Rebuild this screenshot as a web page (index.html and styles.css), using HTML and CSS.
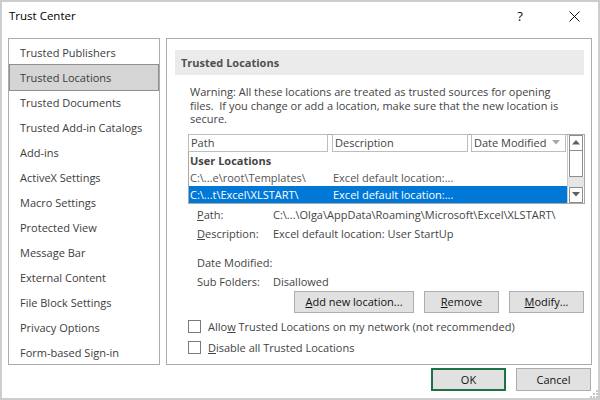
FILE: index.html
```html
<!DOCTYPE html>
<html>
<head>
<meta charset="utf-8">
<link rel="stylesheet" href="styles.css">
</head>
<body>
<div class="window">
  <div class="titlebar">
    <span class="title">Trust Center</span>
    <span class="help">?</span>
    <span class="close"><svg width="11" height="11" viewBox="0 0 11 11"><path d="M0.5 0.5 L10.5 10.5 M10.5 0.5 L0.5 10.5" stroke="#111" stroke-width="1" fill="none"/></svg></span>
  </div>
  <div class="main">
    <ul class="nav">
      <li>Trusted Publishers</li>
      <li class="active">Trusted Locations</li>
      <li>Trusted Documents</li>
      <li>Trusted Add-in Catalogs</li>
      <li>Add-ins</li>
      <li>ActiveX Settings</li>
      <li>Macro Settings</li>
      <li>Protected View</li>
      <li>Message Bar</li>
      <li>External Content</li>
      <li>File Block Settings</li>
      <li>Privacy Options</li>
      <li>Form-based Sign-in</li>
    </ul>
    <div class="panel">
      <div class="section-head">Trusted Locations</div>
      <div class="content">
        <p class="warning">Warning: All these locations are treated as trusted sources for opening<br>files.&nbsp; If you change or add a location, make sure that the new location is<br>secure.</p>
        <div class="list">
          <div class="list-body">
            <div class="list-header">
              <div class="hcell c-path">Path</div>
              <div class="hcell c-desc">Description</div>
              <div class="hcell c-date">Date Modified <svg class="sort" width="8" height="5" viewBox="0 0 8 5"><path d="M0 0 H8 L4 4.5 Z" fill="#a8a8a8"/></svg></div>
            </div>
            <div class="row group">User Locations</div>
            <div class="row"><span class="r-path">C:\...e\root\Templates\</span><span class="r-desc">Excel default location:...</span></div>
            <div class="row selected"><span class="r-path">C:\...t\Excel\XLSTART\</span><span class="r-desc">Excel default location:...</span></div>
          </div>
          <div class="scrollbar">
            <div class="sb-btn"><svg width="8" height="5" viewBox="0 0 8 5"><path d="M0 4.5 H8 L4 0 Z" fill="#606060"/></svg></div>
            <div class="sb-thumb"></div>
            <div class="sb-track"></div>
            <div class="sb-btn"><svg width="8" height="5" viewBox="0 0 8 5"><path d="M0 0 H8 L4 4.5 Z" fill="#606060"/></svg></div>
          </div>
        </div>
        <div class="details">
          <span class="label"><u>P</u>ath:</span><span class="value">C:\...\Olga\AppData\Roaming\Microsoft\Excel\XLSTART\</span>
          <span class="label"><u>D</u>escription:</span><span class="value">Excel default location: User StartUp</span>
          <span class="label gap">Date Modified:</span><span class="value gap"></span>
          <span class="label">Sub Folders:</span><span class="value">Disallowed</span>
        </div>
        <div class="actions">
          <button class="btn btn-add"><u>A</u>dd new location...</button>
          <button class="btn"><u>R</u>emove</button>
          <button class="btn"><u>M</u>odify...</button>
        </div>
        <label class="check"><span class="box"></span><span class="text">Allo<u>w</u> Trusted Locations on my network (not recommended)</span></label>
        <label class="check"><span class="box"></span><span class="text"><u>D</u>isable all Trusted Locations</span></label>
      </div>
    </div>
  </div>
  <div class="footer">
    <button class="btn btn-ok">OK</button>
    <button class="btn">Cancel</button>
  </div>
  <svg class="grip" width="8" height="8" viewBox="0 0 8 8">
    <rect x="6" y="0" width="2" height="2" fill="#c8c8c8"/>
    <rect x="3" y="3" width="2" height="2" fill="#c8c8c8"/>
    <rect x="6" y="3" width="2" height="2" fill="#c8c8c8"/>
    <rect x="0" y="6" width="2" height="2" fill="#c8c8c8"/>
    <rect x="3" y="6" width="2" height="2" fill="#c8c8c8"/>
    <rect x="6" y="6" width="2" height="2" fill="#c8c8c8"/>
  </svg>
</div>
</body>
</html>
```

FILE: styles.css
```css
* { box-sizing: border-box; }
html, body { margin: 0; padding: 0; }
body {
  width: 600px;
  height: 400px;
  font-family: "Open Sans", "Noto Sans", sans-serif;
  font-size: 11px;
  color: #3c3c3c;
  background: #fff;
}
.window {
  position: relative;
  width: 600px;
  height: 400px;
  border: 2px solid #cdcdcd;
  display: flex;
  flex-direction: column;
  background: #fff;
}
.titlebar {
  height: 36px;
  display: flex;
  align-items: flex-start;
  padding-left: 7px;
}
.title {
  flex: 1;
  line-height: 28px;
  font-size: 11.5px;
  color: #000;
}
.help {
  width: 20px;
  text-align: center;
  line-height: 28px;
  font-size: 13px;
  color: #111;
  margin-right: 34px;
}
.close {
  width: 20px;
  height: 28px;
  display: flex;
  align-items: center;
  justify-content: center;
  margin-right: 14px;
}
.main {
  display: flex;
  gap: 6px;
  padding-left: 6px;
  height: 327px;
}
.nav {
  list-style: none;
  margin: 0;
  padding: 1px 0 0 0;
  width: 152px;
  height: 327px;
  border: 1px solid #ababab;
}
.nav li {
  height: 25px;
  line-height: 25px;
  padding-left: 11px;
  white-space: nowrap;
}
.nav li.active {
  background: #d5d5d5;
  border: 1px solid #8f8f8f;
  height: 27px;
  line-height: 25px;
  margin: -1px 0;
  padding-left: 10px;
}
.panel {
  width: 426px;
  height: 327px;
  border: 1px solid #ababab;
}
.section-head {
  margin: 11px 7px 0 8px;
  height: 25px;
  line-height: 25px;
  padding-left: 6px;
  background: #ebebeb;
  font-weight: bold;
  color: #505050;
}
.content {
  padding: 0 6px 0 21px;
}
.warning {
  margin: 10px 0 0 0;
  padding-left: 2px;
  line-height: 13.5px;
  white-space: nowrap;
  color: #444;
}
.list {
  margin-top: 8px;
  display: flex;
  height: 70px;
  border: 1px solid #a9a9a9;
}
.list-body {
  flex: 1;
  display: flex;
  flex-direction: column;
}
.list-header {
  display: flex;
  height: 18px;
  margin: -1px 0 0 -1px;
}
.hcell {
  height: 18px;
  line-height: 16px;
  border: 1px solid #bdbdbd;
  padding-left: 2px;
  color: #444;
  white-space: nowrap;
  display: flex;
  align-items: center;
}
.c-path { width: 140px; margin-right: 4px; }
.c-desc { width: 136px; margin-right: 3px; }
.c-date { width: 95px; }
.sort { margin-left: 6px; }
.row {
  height: 17px;
  line-height: 17px;
  padding-left: 1px;
  display: flex;
  white-space: nowrap;
  color: #555;
}
.row.group {
  font-weight: bold;
  color: #444;
}
.row.selected {
  background: #0078d7;
  color: #fff;
}
.r-path { width: 143px; }
.scrollbar {
  width: 17px;
  border-left: 1px solid #c8c8c8;
  display: flex;
  flex-direction: column;
}
.sb-btn {
  height: 16px;
  border: 1px solid #8e8e8e;
  margin: 0 1px;
  display: flex;
  align-items: center;
  justify-content: center;
  background: #fff;
}
.sb-thumb {
  height: 26px;
  border: 1px solid #8e8e8e;
  border-top: none;
  margin: 0 1px;
  background: #fff;
}
.sb-track {
  height: 10px;
  background: #e6e6e6;
}
.details {
  margin-top: 1px;
  padding-left: 9px;
  display: grid;
  grid-template-columns: 76px 1fr;
  line-height: 19px;
  color: #444;
  white-space: nowrap;
}
.details .gap { margin-top: 10px; }
.actions {
  display: flex;
  justify-content: flex-end;
  gap: 10px;
  margin-right: 1px;
}
.btn {
  font-family: inherit;
  font-size: 11px;
  color: #111;
  background: #e1e1e1;
  border: 1px solid #adadad;
  height: 22px;
  width: 75px;
  padding: 0;
  white-space: nowrap;
}
.btn-add { width: 120px; }
.check {
  display: flex;
  align-items: center;
  height: 21px;
  white-space: nowrap;
  color: #444;
}
.actions + .check { margin-top: 3px; }
.check .box {
  width: 13px;
  height: 13px;
  border: 1px solid #7a7a7a;
  margin-right: 7px;
  background: #fff;
}
.footer {
  display: flex;
  justify-content: flex-end;
  gap: 10px;
  padding: 3px 7px 0 0;
}
.footer .btn {
  height: 23px;
}
.btn-ok {
  border: 2px solid #1e7145;
}
.grip {
  position: absolute;
  right: 0;
  bottom: 0;
}
```
